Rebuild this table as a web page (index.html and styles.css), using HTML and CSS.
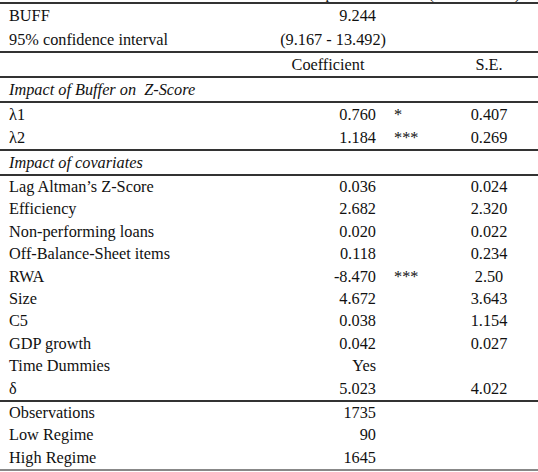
FILE: index.html
```html
<!DOCTYPE html>
<html lang="en">
<head>
    <meta charset="UTF-8">
    <meta name="viewport" content="width=device-width, initial-scale=1.0">
    <title>Threshold estimation results</title>
    <link rel="stylesheet" href="styles.css">
</head>
<body>
    <div class="caption"><span>Threshold results for the dependent variable (Z-Score level)</span></div>
    <table class="results">
        <colgroup>
            <col class="col-label">
            <col class="col-coef">
            <col class="col-sig">
            <col class="col-se">
        </colgroup>
        <tbody>
            <tr class="rule tall">
                <td class="label">BUFF</td>
                <td class="num">9.244</td>
                <td></td>
                <td></td>
            </tr>
            <tr class="tall">
                <td class="label">95% confidence interval</td>
                <td class="num interval">(9.167 - 13.492)</td>
                <td></td>
                <td></td>
            </tr>
            <tr class="rule mid">
                <td></td>
                <td class="head">Coefficient</td>
                <td></td>
                <td class="se">S.E.</td>
            </tr>
            <tr class="rule mid">
                <td class="label section" colspan="4">Impact of Buffer on &nbsp;Z-Score</td>
            </tr>
            <tr class="rule mid">
                <td class="label">λ1</td>
                <td class="num">0.760</td>
                <td class="sig">*</td>
                <td class="se">0.407</td>
            </tr>
            <tr class="mid">
                <td class="label">λ2</td>
                <td class="num">1.184</td>
                <td class="sig">***</td>
                <td class="se">0.269</td>
            </tr>
            <tr class="rule mid">
                <td class="label section" colspan="4">Impact of covariates</td>
            </tr>
            <tr class="rule">
                <td class="label">Lag Altman’s Z-Score</td>
                <td class="num">0.036</td>
                <td></td>
                <td class="se">0.024</td>
            </tr>
            <tr>
                <td class="label">Efficiency</td>
                <td class="num">2.682</td>
                <td></td>
                <td class="se">2.320</td>
            </tr>
            <tr>
                <td class="label">Non-performing loans</td>
                <td class="num">0.020</td>
                <td></td>
                <td class="se">0.022</td>
            </tr>
            <tr>
                <td class="label">Off-Balance-Sheet items</td>
                <td class="num">0.118</td>
                <td></td>
                <td class="se">0.234</td>
            </tr>
            <tr>
                <td class="label">RWA</td>
                <td class="num">-8.470</td>
                <td class="sig">***</td>
                <td class="se">2.50</td>
            </tr>
            <tr>
                <td class="label">Size</td>
                <td class="num">4.672</td>
                <td></td>
                <td class="se">3.643</td>
            </tr>
            <tr>
                <td class="label">C5</td>
                <td class="num">0.038</td>
                <td></td>
                <td class="se">1.154</td>
            </tr>
            <tr>
                <td class="label">GDP growth</td>
                <td class="num">0.042</td>
                <td></td>
                <td class="se">0.027</td>
            </tr>
            <tr>
                <td class="label">Time Dummies</td>
                <td class="num">Yes</td>
                <td></td>
                <td></td>
            </tr>
            <tr>
                <td class="label">δ</td>
                <td class="num">5.023</td>
                <td></td>
                <td class="se">4.022</td>
            </tr>
            <tr class="rule">
                <td class="label">Observations</td>
                <td class="num">1735</td>
                <td></td>
                <td></td>
            </tr>
            <tr>
                <td class="label">Low Regime</td>
                <td class="num">90</td>
                <td></td>
                <td></td>
            </tr>
            <tr class="last">
                <td class="label">High Regime</td>
                <td class="num">1645</td>
                <td></td>
                <td></td>
            </tr>
        </tbody>
    </table>
</body>
</html>
```

FILE: styles.css
```css
body {
    margin: 0;
    background-color: #fff;
    color: #111;
    font-family: "Liberation Serif", "Times New Roman", serif;
    font-size: 16.3px;
}
.caption {
    height: 2px;
    overflow: hidden;
    text-align: right;
    padding-right: 18px;
    font-size: 15px;
}
.caption span {
    display: block;
    margin-top: -13px;
    line-height: 15px;
}
.results {
    width: 538px;
    table-layout: fixed;
    border-collapse: separate;
    border-spacing: 0;
}
.col-label {
    width: 270px;
}
.col-coef {
    width: 116px;
}
.col-sig {
    width: 54px;
}
.col-se {
    width: 98px;
}
.results td {
    padding: 0;
    line-height: 22.4px;
    white-space: nowrap;
    vertical-align: middle;
}
.results tr.tall td {
    line-height: 23.5px;
}
.results tr.mid td {
    line-height: 23px;
}
.results tr.rule td {
    border-top: 2px solid #333;
}
.results tr.last td {
    border-bottom: 2px solid #888;
}
.label {
    padding-left: 9px !important;
}
.section {
    font-style: italic;
}
.num {
    text-align: right;
    padding-right: 10px !important;
}
.interval {
    padding-right: 0 !important;
}
.head {
    text-align: center;
}
.sig {
    padding-left: 8px !important;
}
.se {
    text-align: center;
}
```
